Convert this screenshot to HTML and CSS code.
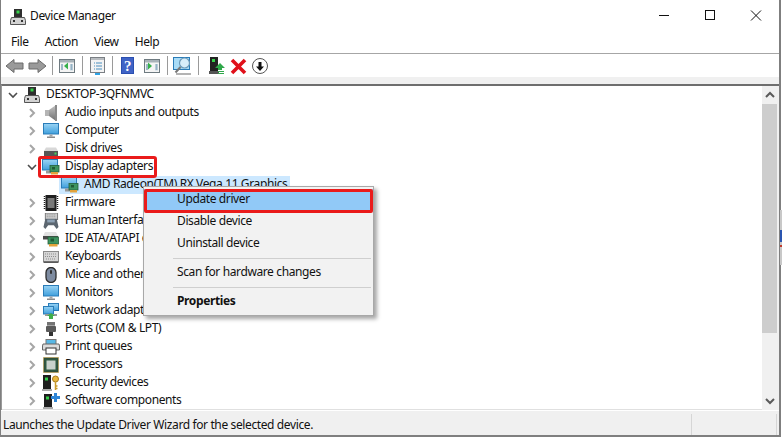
FILE: index.html
```html
<!DOCTYPE html>
<html lang="en">
<head>
<meta charset="utf-8">
<title>Device Manager</title>
<link rel="stylesheet" href="styles.css">
</head>
<body>
<svg class="defs" width="0" height="0">
  <defs>
    <linearGradient id="scr" x1="0" y1="0" x2="0" y2="1"><stop offset="0" stop-color="#9ad4f5"/><stop offset="1" stop-color="#3f9fdc"/></linearGradient>
    <linearGradient id="gry" x1="0" y1="0" x2="0" y2="1"><stop offset="0" stop-color="#c4c4c4"/><stop offset="1" stop-color="#6f6f6f"/></linearGradient>
    <symbol id="tower" viewBox="0 0 16 16">
      <rect x="4" y="0" width="8" height="9" fill="#2e2e2e"/><rect x="6.5" y="1.5" width="3" height="3" fill="#35d04a"/>
      <path d="M1.5 8.5h13l1 3v4H.5v-4z" fill="#d2d2d2" stroke="#555" stroke-width="1"/>
      <rect x="3" y="11" width="2" height="2" fill="#333"/><rect x="11" y="11" width="2" height="2" fill="#333"/>
    </symbol>
    <symbol id="speaker" viewBox="0 0 16 16">
      <rect x="2" y="5" width="4" height="6" fill="#b5b5b5"/><path d="M6 5l7-5v16l-7-5z" fill="url(#gry)"/><rect x="12" y="0" width="2" height="16" fill="#8a8a8a"/>
    </symbol>
    <symbol id="monitor" viewBox="0 0 16 16">
      <rect x=".5" y=".5" width="15" height="10.5" fill="url(#scr)" stroke="#2a7cb8"/>
      <rect x="6.5" y="11.5" width="3" height="2" fill="#a6a6a6"/><rect x="4" y="13.5" width="8" height="1.5" fill="#8a8a8a"/>
    </symbol>
    <symbol id="disk" viewBox="0 0 16 16">
      <path d="M1 10l2-3.500h10l2 3.500z" fill="#d8d8d8"/><rect x="1" y="10" width="14" height="5" fill="#565656"/><rect x="11.500" y="11.500" width="2" height="2" fill="#47d35a"/>
    </symbol>
    <symbol id="card" viewBox="0 0 18 16">
      <rect x=".5" y=".5" width="15" height="10.500" fill="url(#scr)" stroke="#2a7cb8"/>
      <rect x="4" y="11.500" width="6" height="3" fill="#9a9a9a"/>
      <rect x="8" y="6.500" width="9" height="6.500" fill="#3e9460" stroke="#25603b" stroke-width=".8"/>
      <rect x="10" y="8" width="3" height="2.500" fill="#1f5a35"/>
      <rect x="9" y="13" width="7" height="2.500" fill="#e3a23a"/>
    </symbol>
    <symbol id="chip" viewBox="0 0 16 16">
      <rect x="2.500" y="0" width="11" height="16" fill="#1e1e1e"/>
      <rect x="4.500" y="3" width="7" height="10" fill="#787878"/>
      <path d="M1.500 1v14M14.500 1v14" stroke="#1e1e1e" stroke-width="1.500" stroke-dasharray="1 1"/>
    </symbol>
    <symbol id="hid" viewBox="0 0 18 17">
      <rect x="3" y="0" width="13" height="7" fill="#cfcfcf" stroke="#777"/>
      <path d="M4.500 2h10M4.500 4h10" stroke="#888" stroke-dasharray="1 1"/>
      <path d="M3 6h12l2 9-2 2-3-4H6l-3 4-2-2z" fill="#5c6670"/>
      <rect x="5" y="7" width="8" height="3" fill="#8ea2b5"/>
    </symbol>
    <symbol id="ide" viewBox="0 0 18 16">
      <path d="M1 5l2-4h11l2 4z" fill="#e2e2e2"/><rect x="1" y="5" width="15" height="3.500" fill="#4a4a4a"/>
      <rect x="6" y="6" width="10.500" height="7" fill="#3e9460" stroke="#25603b" stroke-width=".8"/>
      <rect x="8.500" y="7.500" width="3.500" height="3" fill="#1f5a35"/>
      <rect x="7" y="13" width="8.500" height="2.500" fill="#e3a23a"/>
    </symbol>
    <symbol id="kbd" viewBox="0 0 16 16">
      <rect x=".5" y="2.500" width="15" height="10" fill="#d6d6d6" stroke="#8a8a8a"/>
      <path d="M2 5h12M2 7.500h12M3 10h10" stroke="#8f8f8f" stroke-dasharray="1 1"/>
      <rect x=".5" y="12.500" width="15" height="1.500" fill="#5a5a5a"/>
    </symbol>
    <symbol id="mouse" viewBox="0 0 16 16">
      <rect x="3" y=".5" width="10" height="15" rx="5" fill="#7d8ba0" stroke="#2b2b2b" stroke-width="1.300"/>
      <rect x="7" y="3" width="2" height="4" rx="1" fill="#333"/>
    </symbol>
    <symbol id="net" viewBox="0 0 16 16">
      <rect x="5.500" y=".5" width="10" height="7" fill="url(#scr)" stroke="#2a7cb8"/>
      <rect x=".5" y="3.500" width="10" height="7.500" fill="url(#scr)" stroke="#2a7cb8"/>
      <rect x="2" y="11" width="12" height="2" fill="#999"/>
      <path d="M8 10l4 3H10v3H6v-3H4z" fill="#3fae49"/>
    </symbol>
    <symbol id="port" viewBox="0 0 16 16">
      <rect x="4" y="1" width="8" height="5" fill="#a4a4a4"/><path d="M5 1v3M7 1v3M9 1v3M11 1v3" stroke="#444"/>
      <rect x="3" y="5" width="10" height="6" rx="1" fill="#5a5a5a"/><rect x="6" y="11" width="4" height="4" fill="#333"/>
    </symbol>
    <symbol id="printer" viewBox="0 0 18 16">
      <rect x="4" y="0.500" width="10" height="5" fill="#58b8e6" stroke="#777"/>
      <path d="M1 5h16l.5 2v4h-17V7z" fill="#dcdcdc" stroke="#666"/>
      <rect x="4" y="9" width="10" height="6" fill="#fff" stroke="#333"/>
    </symbol>
    <symbol id="cpu" viewBox="0 0 16 16">
      <rect x=".5" y=".5" width="15" height="15" fill="#2f4f3c" stroke="#c49a3a" stroke-dasharray="1 1"/>
      <rect x="2" y="2" width="12" height="12" fill="#2f5a42"/><rect x="3.500" y="3.500" width="9" height="9" fill="#c9d2cc"/>
    </symbol>
    <symbol id="sec" viewBox="0 0 18 16">
      <rect x="1" y="0" width="8" height="14" fill="#1e1e1e"/><rect x="3" y="2.500" width="3" height="3" fill="#35d04a"/>
      <rect x="0" y="14" width="10" height="2" fill="#aaa"/>
      <circle cx="13.500" cy="4" r="3" fill="#e9b93f" stroke="#a87c1c"/><path d="M13.500 7v8M13.500 11h2M13.500 13.500h2" stroke="#c99b2c" stroke-width="1.500"/>
    </symbol>
    <symbol id="soft" viewBox="0 0 18 16">
      <rect x="2" y="1" width="8" height="13" fill="#1e1e1e"/><rect x="4" y="3.500" width="3" height="3" fill="#35d04a"/>
      <rect x="1" y="14" width="10" height="2" fill="#aaa"/>
      <path d="M12 0h3v3h3v3h-3v3h-3V6H9V3h3z" fill="#2f86d6"/>
    </symbol>
    <symbol id="win" viewBox="0 0 17 16">
      <rect x=".5" y="1.500" width="15" height="13" fill="#f4f4f4" stroke="#6e7a80"/>
      <rect x="1" y="2" width="14" height="2.500" fill="#a8b2b8"/>
      <rect x="11" y="6" width="3" height="7" fill="#dfe7ec"/><path d="M11.500 7h2M11.500 9h2M11.500 11h2M2 7h2M2 9h2M2 11h2" stroke="#4a7d9c"/>
    </symbol>
  </defs>
</svg>

<div class="window">
  <header class="titlebar">
    <svg class="title-icon"><use href="#tower"/></svg>
    <span class="title-text">Device Manager</span>
    <div class="controls">
      <svg class="ctl" viewBox="0 0 46 30"><path d="M18 15.500h10" stroke="#111"/></svg>
      <svg class="ctl" viewBox="0 0 46 30"><rect x="18.500" y="10.500" width="9" height="9" fill="none" stroke="#111"/></svg>
      <svg class="ctl" viewBox="0 0 46 30"><path d="M18 10.500l10 10M28 10.500l-10 10" stroke="#111" fill="none"/></svg>
    </div>
  </header>

  <nav class="menubar">
    <span class="m-file">File</span><span class="m-action">Action</span><span class="m-view">View</span><span class="m-help">Help</span>
  </nav>

  <div class="toolbar">
    <svg class="tb" viewBox="0 0 23 20"><path d="M3 10l8-6.500V7h9v6h-9v3.500z" fill="#9a9a9a" stroke="#6a6a6a"/></svg>
    <svg class="tb" viewBox="0 0 23 20"><path d="M20 10l-8-6.500V7H3v6h9v3.500z" fill="#9a9a9a" stroke="#6a6a6a"/></svg>
    <i class="sep"></i>
    <svg class="tb" viewBox="0 0 23 20"><use href="#win" x="3" y="2" width="17" height="16"/><path d="M12 6.500v7l-4-3.500z" fill="#35b04a"/></svg>
    <i class="sep"></i>
    <svg class="tb" viewBox="0 0 23 20"><rect x="4.500" y="1.500" width="14" height="15" fill="#f3f3f3" stroke="#7a7f84"/><rect x="5" y="2" width="13" height="2" fill="#b8bcc0"/><path d="M8 7h1M10 7h6M8 10h1M10 10h6M8 13h1M10 13h6" stroke="#4a8fc0"/><rect x="9" y="17" width="5" height="2" fill="#2ea3e6"/></svg>
    <i class="sep"></i>
    <svg class="tb tw" viewBox="0 0 24 20"><rect x="5" y="1" width="13" height="17" fill="#2b4fb0"/><rect x="6" y="2" width="11" height="15" fill="#3f63c6"/><text x="11.500" y="15" class="q">?</text></svg>
    <svg class="tb tw" viewBox="0 0 24 20"><use href="#win" x="4" y="2" width="17" height="16"/><path d="M8 6.500v7l4-3.500z" fill="#35b04a"/></svg>
    <i class="sep"></i>
    <svg class="tb tw" viewBox="0 0 24 20"><rect x="2.500" y="1.500" width="16" height="12" fill="#a9dcf7" stroke="#2a7cb8"/><circle cx="13.500" cy="7" r="5" fill="#d8eefa" stroke="#6d9ab8" stroke-width="1.200"/><path d="M9.500 11l-5 5.500" stroke="#777" stroke-width="2"/><path d="M5 18h15" stroke="#9a9a9a" stroke-width="1.500"/></svg>
    <i class="sep"></i>
    <div class="tb-last">
      <svg class="tb tn" viewBox="0 0 22 20"><rect x="5" y="1" width="8" height="14" fill="#222"/><rect x="7" y="3" width="3" height="3" fill="#35d04a"/><rect x="4" y="15" width="10" height="3" fill="#555"/><path d="M15 7l5 5h-3v2h-4v-2h-3z" fill="#2fa84a"/><path d="M13 15.500h6M13 17.500h6" stroke="#2fa84a"/></svg>
      <svg class="tb tn" viewBox="0 0 22 20"><path d="M5 4l13 13M18 4L5 17" stroke="#e0101a" stroke-width="3.600"/></svg>
      <svg class="tb tn" viewBox="0 0 22 20"><circle cx="11" cy="10" r="7.500" fill="#fff" stroke="#555"/><path d="M11 15l-4-4.500h2.500V6h3v4.500H15z" fill="#111"/></svg>
    </div>
  </div>

  <div class="strip"></div>

  <main class="content">
    <div class="tree">
      <div class="row d0"><svg class="chev"><path d="M4 7l4 4 4-4" class="open"/></svg><svg class="ico"><use href="#tower"/></svg><span>DESKTOP-3QFNMVC</span></div>
      <div class="row d1"><svg class="chev"><path d="M6 5l4 4-4 4" class="closed"/></svg><svg class="ico"><use href="#speaker"/></svg><span>Audio inputs and outputs</span></div>
      <div class="row d1"><svg class="chev"><path d="M6 5l4 4-4 4" class="closed"/></svg><svg class="ico"><use href="#monitor"/></svg><span>Computer</span></div>
      <div class="row d1"><svg class="chev"><path d="M6 5l4 4-4 4" class="closed"/></svg><svg class="ico"><use href="#disk"/></svg><span>Disk drives</span></div>
      <div class="row d1"><svg class="chev"><path d="M4 7l4 4 4-4" class="open"/></svg><div class="callout"><svg class="ico"><use href="#card"/></svg><span>Display adapters</span></div></div>
      <div class="row d2"><div class="selected"><svg class="ico"><use href="#card"/></svg><span>AMD Radeon(TM) RX Vega 11 Graphics</span></div></div>
      <div class="row d1"><svg class="chev"><path d="M6 5l4 4-4 4" class="closed"/></svg><svg class="ico"><use href="#chip"/></svg><span>Firmware</span></div>
      <div class="row d1"><svg class="chev"><path d="M6 5l4 4-4 4" class="closed"/></svg><svg class="ico"><use href="#hid"/></svg><span>Human Interface Devices</span></div>
      <div class="row d1"><svg class="chev"><path d="M6 5l4 4-4 4" class="closed"/></svg><svg class="ico"><use href="#ide"/></svg><span>IDE ATA/ATAPI controllers</span></div>
      <div class="row d1"><svg class="chev"><path d="M6 5l4 4-4 4" class="closed"/></svg><svg class="ico"><use href="#kbd"/></svg><span>Keyboards</span></div>
      <div class="row d1"><svg class="chev"><path d="M6 5l4 4-4 4" class="closed"/></svg><svg class="ico"><use href="#mouse"/></svg><span>Mice and other pointing devices</span></div>
      <div class="row d1"><svg class="chev"><path d="M6 5l4 4-4 4" class="closed"/></svg><svg class="ico"><use href="#monitor"/></svg><span>Monitors</span></div>
      <div class="row d1"><svg class="chev"><path d="M6 5l4 4-4 4" class="closed"/></svg><svg class="ico"><use href="#net"/></svg><span>Network adapters</span></div>
      <div class="row d1"><svg class="chev"><path d="M6 5l4 4-4 4" class="closed"/></svg><svg class="ico"><use href="#port"/></svg><span>Ports (COM &amp; LPT)</span></div>
      <div class="row d1"><svg class="chev"><path d="M6 5l4 4-4 4" class="closed"/></svg><svg class="ico"><use href="#printer"/></svg><span>Print queues</span></div>
      <div class="row d1"><svg class="chev"><path d="M6 5l4 4-4 4" class="closed"/></svg><svg class="ico"><use href="#cpu"/></svg><span>Processors</span></div>
      <div class="row d1"><svg class="chev"><path d="M6 5l4 4-4 4" class="closed"/></svg><svg class="ico"><use href="#sec"/></svg><span>Security devices</span></div>
      <div class="row d1"><svg class="chev"><path d="M6 5l4 4-4 4" class="closed"/></svg><svg class="ico"><use href="#soft"/></svg><span>Software components</span></div>
    </div>
    <div class="scrollbar">
      <svg class="sb-btn" viewBox="0 0 17 18"><path d="M4 11l4-4 4 4" class="sb-arrow"/></svg>
      <div class="thumb"></div>
      <div class="track"></div>
      <svg class="sb-btn" viewBox="0 0 17 18"><path d="M4 7l4 4 4-4" class="sb-arrow"/></svg>
    </div>

    <div class="menu">
      <div class="item hl">Update driver</div>
      <div class="item">Disable device</div>
      <div class="item">Uninstall device</div>
      <div class="divider"></div>
      <div class="item">Scan for hardware changes</div>
      <div class="divider"></div>
      <div class="item strong">Properties</div>
    </div>
  </main>

  <footer class="status">
    <div class="cell main-cell">Launches the Update Driver Wizard for the selected device.</div>
    <div class="cell side-cell"></div>
  </footer>
</div>
<div class="edge"></div>
</body>
</html>
```
FILE: styles.css
```css
* { box-sizing: border-box; }
html, body { margin: 0; padding: 0; }
body {
  width: 782px;
  height: 438px;
  overflow: hidden;
  background: #fff;
  padding: 0 1px 1px 0;
  font: 12px/16px "Noto Sans", "Open Sans", sans-serif;
  letter-spacing: -0.38px;
  color: #111;
  position: relative;
}
.defs { position: absolute; }
.window {
  height: 437px;
  border: 2px solid #7f7f7f;
  border-top: 0;
  border-left-width: 1px;
  background: #fff;
  display: flex;
  flex-direction: column;
}
.titlebar {
  height: 32px;
  flex: none;
  display: flex;
  align-items: center;
  padding-left: 9px;
  margin-top: 2px;
}
.title-icon { width: 16px; height: 18px; margin-right: 4px; margin-top: -3px; }
.title-text { margin-top: -4px; }
.controls { margin-left: auto; display: flex; align-items: flex-start; margin-top: -2px; align-self: flex-start; }
.ctl { width: 46px; height: 30px; display: block; }
.menubar {
  height: 20px;
  flex: none;
  display: flex;
  align-items: center;
  padding-left: 10px;
  border-bottom: 1px solid #a6a6a6;
  padding-bottom: 3px;
}
.m-file { margin-right: 16px; }
.m-action { margin-right: 16px; }
.m-view { margin-right: 16px; }
.toolbar {
  height: 23px;
  flex: none;
  display: flex;
  align-items: center;
  padding-left: 2px;
}
.tb { width: 23px; height: 20px; display: block; flex: none; }
.tw { width: 24px; }
.tn { width: 22px; }
.tb-last { display: flex; padding-left: 3px; }
.sep { width: 1px; height: 19px; background: #9a9a9a; margin: 0 3px; flex: none; }
.q { font: bold 15px "Liberation Serif", serif; fill: #fff; text-anchor: middle; }
.strip { height: 7px; flex: none; background: #f0f0f0; }
.content {
  flex: 1;
  min-height: 0;
  display: flex;
  position: relative;
  border-top: 2px solid #6e6e6e;
  border-left: 1px solid #9a9a9a;
}
.tree { flex: 1; min-width: 0; overflow: hidden; border-bottom: 1px solid #e0e0e0; }
.row { height: 18px; display: flex; align-items: center; white-space: nowrap; }
.row span { padding-bottom: 2px; }
.d0 { padding-left: 3px; }
.d1 { padding-left: 22px; }
.d2 { padding-left: 57px; }
.chev { width: 16px; height: 18px; margin-right: 2px; flex: none; }
.open { fill: none; stroke: #4d4d4d; stroke-width: 1.600; }
.closed { fill: none; stroke: #a6a6a6; stroke-width: 2; }
.ico { width: 18px; height: 16px; margin-right: 5px; flex: none; }
.selected {
  display: flex;
  align-items: center;
  height: 18px;
  padding: 0 3px 0 2px;
  background: #cce8ff;
}
.callout { display: flex; align-items: center; position: relative; }
.callout::after {
  content: "";
  position: absolute;
  left: -4px;
  right: -4px;
  top: -2px;
  bottom: -2px;
  border: 3px solid #ea1b1b;
  border-radius: 3px;
}
.scrollbar {
  width: 17px;
  flex: none;
  background: #f0f0f0;
  display: flex;
  flex-direction: column;
}
.sb-btn { width: 17px; height: 18px; display: block; flex: none; }
.sb-arrow { fill: none; stroke: #5a5a5a; stroke-width: 2; }
.thumb { width: 15px; height: 229px; background: #cdcdcd; flex: none; }
.track { flex: 1; }
.menu {
  position: absolute;
  left: 141px;
  top: 100px;
  width: 231px;
  height: 130px;
  background: #f2f2f2;
  border: 1px solid #a8a8a8;
  box-shadow: 3px 3px 4px rgba(0, 0, 0, .35);
  padding-top: 2px;
}
.item { height: 22px; line-height: 20px; padding-left: 33px; position: relative; }
.item.hl { background: #91c9f7; }
.item.hl::after {
  content: "";
  position: absolute;
  left: 0;
  right: 0;
  top: 0;
  bottom: -2px;
  border: 3px solid #ea1b1b;
  border-radius: 2px;
}
.strong { font-weight: 700; }
.divider { height: 1px; background: #cfcfcf; margin: 3px 2px 3px 29px; }
.status {
  flex: none;
  height: 25px;
  display: flex;
  background: #f0f0f0;
  padding-top: 2px;
  border-top: 1px solid #fff;
}
.cell { border-right: 1px solid #d6d6d6; margin-top: 1px; padding-left: 2px; line-height: 22px; white-space: nowrap; }
.main-cell { width: 691px; }
.side-cell { width: 85px; }
.edge {
  position: absolute;
  right: 0;
  top: 210px;
  width: 2px;
  height: 55px;
  background: linear-gradient(#c8c8c8 0 20px, #2a55b0 20px 32px, #c8c8c8 32px 35px, #c0392b 35px 37px, #c8c8c8 37px);
}
```
